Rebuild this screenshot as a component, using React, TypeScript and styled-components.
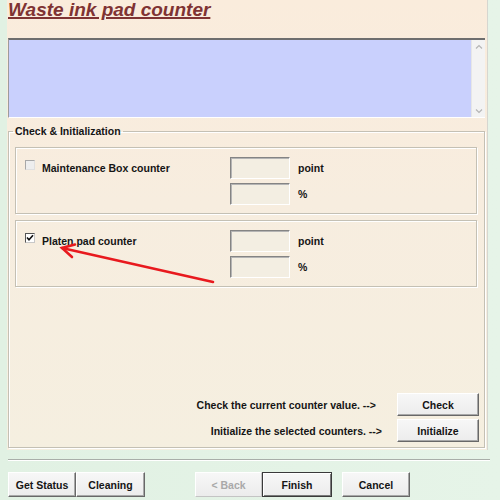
import React from 'react';
import styled, { createGlobalStyle } from 'styled-components';

const GlobalStyle = createGlobalStyle`
  html, body {
    margin: 0;
    padding: 0;
    background: #e3f2e5;
  }
  body {
    font-family: "Liberation Sans", Arial, sans-serif;
    font-size: 10.5px;
    font-weight: bold;
    color: #151515;
  }
`;

const Screen = styled.div`
  position: relative;
  width: 500px;
  height: 500px;
  overflow: hidden;
  background: linear-gradient(90deg, #e1f1e3, #e6f4e8);
`;

const Panel = styled.div`
  box-sizing: border-box;
  margin-left: 7px;
  width: 481px;
  height: 450px;
  padding: 0 2px 0 1px;
  background: linear-gradient(180deg, #faecdc 0%, #f7eddf 45%, #f5efe0 100%);
  border-right: 1px solid #d6d6d0;
`;

const Title = styled.h1`
  margin: 0;
  height: 38px;
  font-size: 19px;
  line-height: 20px;
  font-style: italic;
  font-weight: bold;
  color: #7f3333;
  text-decoration: underline;
  text-decoration-thickness: 2px;
  text-underline-offset: 1px;
`;

const MessageArea = styled.div`
  display: flex;
  height: 80px;
  box-sizing: border-box;
  border-top: 2px solid #6e6e6e;
  border-left: 1px solid #9c9c9c;
  border-bottom: 1px solid #ffffff;
`;

const MessageText = styled.div`
  flex: 1;
  background: #c9d0fd;
`;

const ScrollBar = styled.div`
  width: 14px;
  background: #f3f3f3;
  border-left: 1px solid #e6e6e6;
  display: flex;
  flex-direction: column;
  justify-content: space-between;
  align-items: center;
  padding: 4px 0 3px;
  box-sizing: border-box;
`;

const GroupBox = styled.fieldset`
  box-sizing: border-box;
  margin: 7px 0 0;
  height: 323px;
  padding: 10px 7px 3px 6px;
  border: 1px solid #c4c0b4;
  box-shadow: inset 1px 1px 0 #ffffff, 1px 1px 0 #ffffff;
`;

const Legend = styled.legend`
  padding: 0 2px;
  margin-left: -2px;
  line-height: 12px;
`;

const GroupBody = styled.div`
  display: flex;
  flex-direction: column;
  height: 297px;
`;

const CounterBox = styled.div<{ gap?: number }>`
  display: grid;
  grid-template-columns: 17px 188px 60px auto;
  grid-template-rows: 22px 22px;
  row-gap: 4px;
  align-items: center;
  margin-top: ${p => p.gap ?? 0}px;
  padding: 9px 0 8px 9px;
  border: 1px solid #c4c0b4;
  box-shadow: inset 1px 1px 0 #ffffff, 1px 1px 0 #ffffff;
`;

const CheckBox = styled.span<{ checked?: boolean }>`
  box-sizing: border-box;
  width: 10px;
  height: 10px;
  margin-top: ${p => (p.checked ? -6 : -7)}px;
  display: flex;
  align-items: center;
  justify-content: center;
  background: ${p => (p.checked ? '#ffffff' : '#eeeeee')};
  border: 1px solid;
  border-color: ${p => (p.checked ? '#555 #c8c8c8 #c8c8c8 #555' : '#a8a8a8 #e0e0e0 #e0e0e0 #a8a8a8')};
`;

const CounterName = styled.span`
  white-space: nowrap;
`;

const ValueField = styled.div`
  grid-column: 3;
  height: 22px;
  box-sizing: border-box;
  background: #f3eee2;
  border: 1px solid;
  border-color: #848484 #ffffff #ffffff #848484;
  box-shadow: inset 1px 1px 0 #b4b4b4;
`;

const Unit = styled.span`
  grid-column: 4;
  padding-left: 8px;
`;

const Actions = styled.div`
  margin-top: auto;
  margin-bottom: 2px;
  display: flex;
  flex-direction: column;
  gap: 3px;
  margin-right: -2px;
`;

const ActionRow = styled.div<{ shift?: number }>`
  display: flex;
  justify-content: flex-end;
  align-items: center;
  gap: ${p => p.shift ?? 15}px;
`;

const Button = styled.button<{ w: number; primary?: boolean }>`
  box-sizing: border-box;
  width: ${p => p.w}px;
  height: 23px;
  padding: 0;
  font-family: "Liberation Sans", Arial, sans-serif;
  font-size: 10.5px;
  font-weight: bold;
  color: ${p => (p.disabled ? '#a9a9a9' : '#151515')};
  background: linear-gradient(180deg, #f7f7f7, #ececec);
  border: 1px solid;
  border-color: ${p =>
    p.primary
      ? '#3a3a3a'
      : p.disabled
      ? '#ffffff #c4c4c4 #c4c4c4 #ffffff'
      : '#ffffff #686868 #686868 #ffffff'};
  box-shadow: ${p =>
    p.primary
      ? 'inset 1px 1px 0 #ffffff, inset -1px -1px 0 #7a7a7a'
      : p.disabled
      ? 'none'
      : 'inset -1px -1px 0 #a8a8a8'};
`;

const Separator = styled.div`
  margin: 9px 0 0 8px;
  width: 482px;
  height: 1px;
  background: #a9aea9;
  border-bottom: 1px solid #ffffff;
`;

const ButtonBar = styled.div`
  display: flex;
  margin-top: 11px;
  padding-left: 8px;

  & > button {
    height: 25px;
  }
`;

const Spacer = styled.div<{ w: number }>`
  width: ${p => p.w}px;
`;

const Overlay = styled.svg`
  position: absolute;
  left: 0;
  top: 0;
  pointer-events: none;
`;

const Chevron = ({ up }: { up?: boolean }) => (
  <svg width="8" height="5" viewBox="0 0 8 5">
    <path
      d={up ? 'M1 4.5 L4 1.5 L7 4.5' : 'M1 0.5 L4 3.5 L7 0.5'}
      fill="none"
      stroke="#b5b5b5"
      strokeWidth="1.2"
    />
  </svg>
);

const Tick = () => (
  <svg width="8" height="8" viewBox="0 0 8 8">
    <path d="M1 3.5 L3 5.8 L7 1.2" fill="none" stroke="#111" strokeWidth="1.6" />
  </svg>
);

type Counter = { name: string; checked: boolean };

const counters: Counter[] = [
  { name: 'Maintenance Box counter', checked: false },
  { name: 'Platen pad counter', checked: true },
];

export default function App() {
  return (
    <Screen>
      <GlobalStyle />
      <Panel>
        <Title>Waste ink pad counter</Title>
        <MessageArea>
          <MessageText />
          <ScrollBar>
            <Chevron up />
            <Chevron />
          </ScrollBar>
        </MessageArea>
        <GroupBox>
          <Legend>Check &amp; Initialization</Legend>
          <GroupBody>
            {counters.map((c, i) => (
              <CounterBox key={c.name} gap={i === 0 ? 0 : 6}>
                <CheckBox checked={c.checked}>{c.checked && <Tick />}</CheckBox>
                <CounterName>{c.name}</CounterName>
                <ValueField />
                <Unit>point</Unit>
                <ValueField />
                <Unit>%</Unit>
              </CounterBox>
            ))}
            <Actions>
              <ActionRow shift={21}>
                <span>Check the current counter value. --&gt;</span>
                <Button w={82}>Check</Button>
              </ActionRow>
              <ActionRow shift={15}>
                <span>Initialize the selected counters. --&gt;</span>
                <Button w={82}>Initialize</Button>
              </ActionRow>
            </Actions>
          </GroupBody>
        </GroupBox>
      </Panel>
      <Separator />
      <ButtonBar>
        <Button w={68}>Get Status</Button>
        <Button w={69}>Cleaning</Button>
        <Spacer w={50} />
        <Button w={67} disabled>
          &lt; Back
        </Button>
        <Button w={70} primary>
          Finish
        </Button>
        <Spacer w={10} />
        <Button w={68}>Cancel</Button>
      </ButtonBar>
      <Overlay width="500" height="500" viewBox="0 0 500 500">
        <g stroke="#e8191e" strokeWidth="2.6" strokeLinecap="round" fill="none">
          <path d="M213 282 L62 248" />
          <path d="M75 244.5 L62 248 L72 257" />
        </g>
      </Overlay>
    </Screen>
  );
}
